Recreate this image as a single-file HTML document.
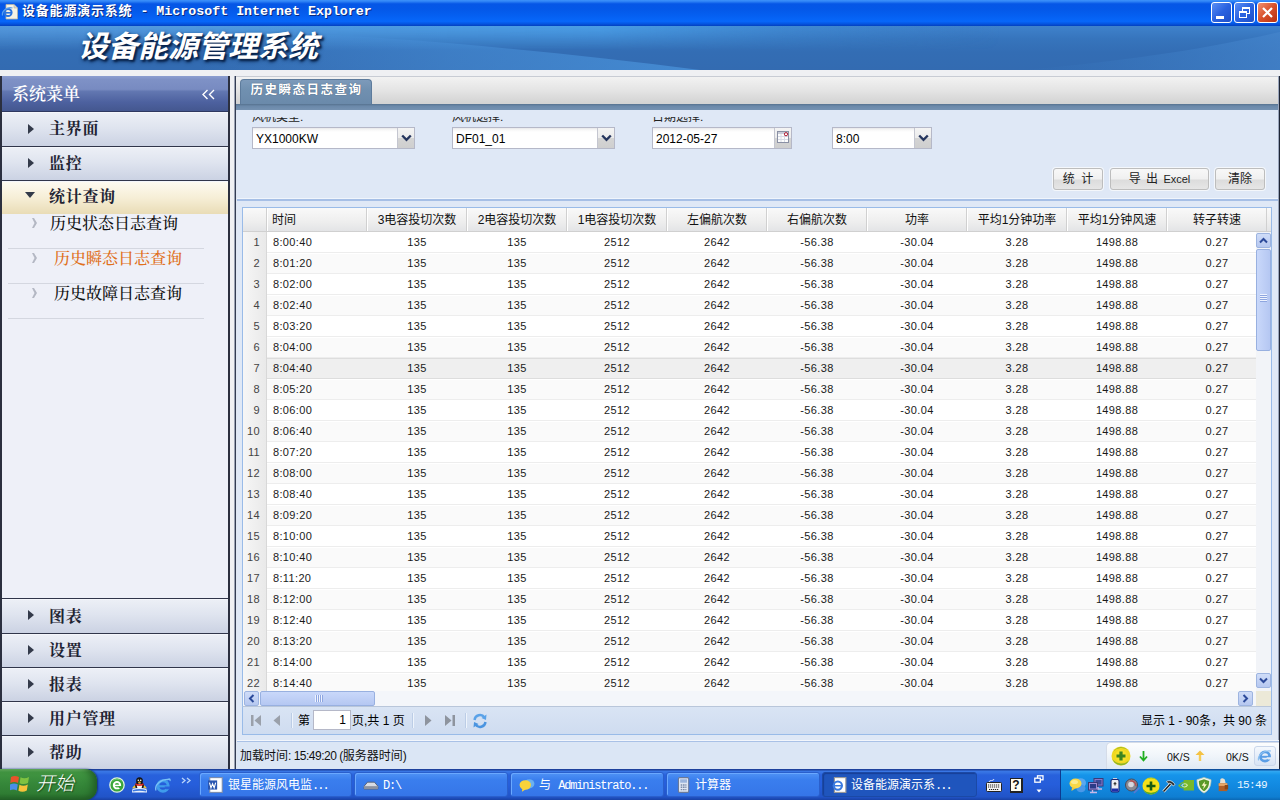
<!DOCTYPE html>
<html lang="zh-CN">
<head>
<meta charset="utf-8">
<title>设备能源演示系统 - Microsoft Internet Explorer</title>
<style>
*{box-sizing:border-box;margin:0;padding:0}
html,body{width:1280px;height:800px;overflow:hidden;background:#eff0f3;}
body{position:relative;font-family:"Liberation Sans","Noto Sans CJK SC",sans-serif;font-size:12px;color:#000;}
.abs{position:absolute}
/* ---------- XP title bar ---------- */
#titlebar{position:absolute;left:0;top:0;width:1280px;height:26px;
 background:linear-gradient(to bottom,#3f93fa 0%,#2c80f5 6%,#0656e6 15%,#0458e8 35%,#0560f2 62%,#0767fa 82%,#0556e2 91%,#0340bf 100%);}
#titlebar .ttl{position:absolute;left:22px;top:2px;height:18px;line-height:18px;color:#fff;font-weight:bold;white-space:nowrap;
 font-family:"Liberation Mono","Noto Sans CJK SC",monospace;font-size:13.3px;text-shadow:1px 1px 0 #0a2a80;}
#titlebar .ttl .cn{font-family:"Liberation Sans","Noto Sans CJK SC",sans-serif;font-size:13px;letter-spacing:0.8px}
.wbtn{position:absolute;top:2px;width:21px;height:21px;border:1px solid #fff;border-radius:3px;
 background:linear-gradient(135deg,#5b8ff5 0%,#2a62e0 50%,#1e4fc8 100%);}
.wbtn.close{background:linear-gradient(135deg,#f09070 0%,#d8502a 50%,#b83010 100%);}
/* ---------- banner ---------- */
#banner{position:absolute;left:0;top:26px;width:1280px;height:44px;overflow:hidden;
 background:linear-gradient(to bottom,#2f74bf 0%,#2c6cb6 40%,#2966ad 100%);}
#banner .logo{position:absolute;left:78px;top:1px;height:40px;line-height:40px;font-size:30px;font-weight:bold;font-style:italic;color:#fff;
 font-family:"Liberation Sans","Noto Sans CJK SC",sans-serif;letter-spacing:0;white-space:nowrap;text-shadow:2px 2px 2px #08224a,1px 2px 4px #0c2a55;}
/* ---------- sidebar ---------- */
#side{position:absolute;left:0;top:76px;width:230px;height:693px;background:#eef0f8;border-left:2px solid #2b2f3f;border-right:2px solid #2b2f3f;}
#side .hd{position:absolute;left:0;top:0;width:226px;height:36px;
 background:linear-gradient(to bottom,#8c9ed0 0%,#7e91c6 10%,#788bc1 38%,#6277b1 44%,#4d619f 75%,#44578f 100%);border-bottom:1px solid #2e3860;}
#side .hd .t{position:absolute;left:10px;top:7px;font-family:"Liberation Serif","Noto Serif CJK SC",serif;font-size:17px;font-weight:600;line-height:24px;color:#fff;}
.mi{position:absolute;left:0;width:226px;height:34px;border-bottom:1px solid #30354a;border-top:1px solid #f4f6fb;
 background:linear-gradient(to bottom,#eceff6 0%,#dfe4ef 45%,#cbd2e3 100%);}
.mi .t{position:absolute;left:47px;top:4px;font-family:"Liberation Serif","Noto Serif CJK SC",serif;font-weight:bold;font-size:16px;letter-spacing:0.7px;line-height:24px;color:#1f2433;}
.mi .ar{position:absolute;left:26px;top:10px;width:0;height:0;border-left:6px solid #333a4a;border-top:5px solid transparent;border-bottom:5px solid transparent;}
.mi.sel{background:linear-gradient(to bottom,#fdfaf0 0%,#f6eed6 50%,#e9dcb6 100%);}
.mi.sel .ar{left:23px;top:10px;border-left:5px solid transparent;border-right:5px solid transparent;border-top:6px solid #333a4a;border-bottom:0}
.si{position:absolute;left:0;width:226px;height:35px;}
.si .t{position:absolute;left:48px;top:-1px;font-family:"Liberation Serif","Noto Serif CJK SC",serif;font-size:16px;font-weight:500;line-height:24px;color:#111;}
.si .ar{position:absolute;left:30px;top:5px;width:5px;height:10px;background:#b4b8c4;clip-path:polygon(0 0,40% 0,100% 50%,40% 100%,0 100%,50% 50%)}
.si .ln{position:absolute;left:6px;width:196px;height:1px;background:#d4d7e0}
/* ---------- main ---------- */
#main{position:absolute;left:237px;top:76px;width:1043px;height:693px;background:#dfe8f6;box-shadow:-1px 0 0 #dfe6f2,-2px 0 0 #333c52,-3px 0 0 #9aa2b4}
#tabstrip{position:absolute;left:-1px;top:0;width:1044px;height:28px;background:linear-gradient(to bottom,#f2f2f2 0%,#e4e4e4 50%,#d2d2d2 100%);border-top:1px solid #c8ccd4}
#tab{position:absolute;left:4px;top:2px;width:132px;height:26px;border-radius:4px 4px 0 0;border:1px solid #5d7b9c;border-bottom:0;
 background:linear-gradient(to bottom,#7d9aba 0%,#7090b0 40%,#6a89aa 100%);color:#fff;font-weight:bold;font-size:12.5px;letter-spacing:1.5px;padding-left:1px;line-height:20px;text-align:center;
 font-family:"Liberation Sans","Noto Sans CJK SC",sans-serif;text-shadow:0 0 1px #3a506a}
#tabline{position:absolute;left:-1px;top:28px;width:1044px;height:6px;background:linear-gradient(to bottom,#56728f 0%,#6b89aa 35%,#7592b2 100%);}
#form{position:absolute;left:0;top:34px;width:1043px;height:91px;background:#dfe8f6;border-bottom:2px solid #a6bfe6;box-shadow:inset 0 -1px 0 #f0f5fc;overflow:hidden}
.lbl{position:absolute;top:-7px;font-size:12px;line-height:14px;color:#222;white-space:nowrap;font-family:"Liberation Sans","Noto Sans CJK SC",sans-serif}
.cb{position:absolute;top:17px;height:22px;background:linear-gradient(to bottom,#e8e8ea 0,#f8f8f8 2px,#fff 4px);border:1px solid #b5b8c8;font-size:12px;line-height:22px;padding-left:3px;color:#000;white-space:nowrap}
.cb .tr{position:absolute;right:0;top:0;width:17px;height:20px;border-left:1px solid #c4c6d0;background:linear-gradient(to bottom,#f4f4f4 0%,#ececec 48%,#d4d4d4 52%,#cfcfcf 100%)}
.cb .tr svg{position:absolute;left:3px;top:6px}
.btn{position:absolute;top:58px;height:22px;border:1px solid #bdbdbd;border-radius:3px;background:linear-gradient(to bottom,#f8f8f8 0%,#f0f0f0 50%,#dcdcdc 55%,#e6e6e6 100%);
 font-size:12px;line-height:20px;text-align:center;color:#222;white-space:nowrap;box-shadow:0 0 0 1px #f4f7fb}
/* grid */
#grid{position:absolute;left:5px;top:131px;width:1030px;height:500px;border-bottom:0;background:#fff;border:1px solid #99bbe8;overflow:hidden}
#ghd{position:absolute;left:0;top:0;width:1028px;height:24px;background:linear-gradient(to bottom,#f9f9f9 0%,#eeeeee 60%,#e3e4e6 100%);border-bottom:1px solid #d0d0d0}
#ghd div{position:absolute;top:0;height:23px;line-height:25px;font-size:12px;color:#111;text-align:center;border-right:1px solid #d0d0d0;border-left:1px solid #fff;white-space:nowrap;overflow:hidden}
#gbody{position:absolute;left:0;top:24px;width:1013px;height:459px;overflow:hidden;background:#fff}
.r{position:absolute;left:0;width:1013px;height:21px;border-bottom:1px solid #ededed;border-top:1px solid #fff;font-size:11px;letter-spacing:0.35px;line-height:19px;color:#1a1a1a;white-space:nowrap}
.r.alt{background:#fafafa}
.r.hov{background:#efefef;border-top:1px solid #ddd;border-bottom:1px solid #ddd}
.r span{position:absolute;top:0;height:19px;text-align:center;overflow:hidden}
.r .n{left:0;width:24px;background:linear-gradient(to right,#f6f6f6,#e9e9e9);border-right:1px solid #d8d8d8;color:#444;text-align:right;padding-right:6px;height:21px;top:-1px;line-height:21px}
.r .tm{left:30px;width:70px;text-align:left}
/* scrollbars */
#vsb{position:absolute;left:1013px;top:24px;width:15px;height:459px;background:#f2f4f8;}
#hsb{position:absolute;left:0;top:483px;width:1013px;height:15px;background:#f4f6fa;}
.sbb{position:absolute;width:15px;height:15px;border:1px solid #9db4e0;border-radius:2px;background:linear-gradient(to bottom,#cfdcf8,#b6c8f0);}
.thumb{position:absolute;border:1px solid #98b0e0;border-radius:2px;background:linear-gradient(to right,#c6d5f8,#b4c6f0)}
/* paging */
#pg{position:absolute;left:5px;top:630px;width:1030px;height:29px;background:linear-gradient(to bottom,#d9e4f4 0%,#cfdcf0 100%);border:1px solid #99bbe8;border-top:1px solid #b9c6da;font-size:12px;line-height:28px;color:#000}
#status{position:absolute;left:0;top:664px;width:1042px;height:29px;background:#dbe6f5;border-top:1px solid #f2f6fc;box-shadow:inset 0 1px 0 #a9c1e6}
#status .tx{position:absolute;left:3px;top:7px;font-size:12px;line-height:16px;color:#111;white-space:nowrap}
.sep{top:6px;width:2px;height:15px;border-left:1px solid #bccde6;border-right:1px solid #eef4fc}
#wdg{position:absolute;left:869px;top:1px;width:173px;height:27px;border-radius:5px 0 0 0;border:1px solid #d5dce8;border-bottom:0;border-right:0;background:linear-gradient(to bottom,#fcfdfe 0%,#f0f5fa 50%,#dfe9f4 100%);font-size:10.5px;line-height:16px;color:#111;font-family:"Liberation Sans",sans-serif}
/* taskbar */
#taskbar{position:absolute;left:0;top:769px;width:1280px;height:31px;
 background:linear-gradient(to bottom,#1d419c 0,#1d419c 1px,#3a78e6 2px,#3470e2 4px,#2861dc 6px,#265edb 50%,#2154c8 90%,#1941a5 100%);}
#start{position:absolute;left:0;top:0;width:97px;height:31px;border-radius:0 12px 12px 0;
 background:linear-gradient(to bottom,#6ab064 0%,#429642 10%,#36883a 45%,#2f7c33 80%,#225f26 100%);box-shadow:1px 0 2px #12307a,inset -8px 0 8px -4px #1f5a22}
#start .t{position:absolute;left:36px;top:2px;color:#fff;font-style:italic;font-weight:300;font-size:19px;line-height:26px;font-family:"Liberation Sans","Noto Sans CJK SC",sans-serif;text-shadow:1px 1px 1px #1a4a1a;white-space:nowrap}
.tk{position:absolute;top:3px;height:25px;border-radius:3px;background:linear-gradient(to bottom,#4f92f5 0%,#3a7eee 30%,#3575e8 100%);border:1px solid #2a5fcc;box-shadow:inset 1px 1px 0 #6aa8ff;
 color:#fff;font-size:12px;line-height:22px;white-space:nowrap;overflow:hidden;font-family:"Liberation Mono","Noto Sans CJK SC",monospace}
.tk.act{background:#1f55bd;border-color:#1b49a6;box-shadow:inset 1px 1px 1px #173f96}
.tk .ic{position:absolute;left:8px;top:4px;width:16px;height:16px}
.tk .tx{position:absolute;left:28px;top:2px}
.tk .la{letter-spacing:-1.2px}
#tray{position:absolute;left:1060px;top:0;width:220px;height:31px;border-left:1px solid #0e3a90;
 background:linear-gradient(to bottom,#0c4e9c 0,#0c4e9c 1px,#35a8f2 2px,#22a0ee 4px,#1694ea 6px,#1289e0 55%,#0f7ed2 90%,#0b68b4 100%);}
</style>
</head>
<body>
<div id="titlebar">
  <svg class="abs" style="left:1px;top:3px" width="18" height="18" viewBox="0 0 18 18"><path d="M5 1.5 H13 L16.5 5 V16 H5Z" fill="#f6f2e4" stroke="#b8b4a4" stroke-width=".8"/><path d="M13 1.5 V5 H16.5" fill="#dcd8c8" stroke="#b8b4a4" stroke-width=".6"/><circle cx="7" cy="9.5" r="3.6" fill="none" stroke="#2a74e0" stroke-width="2"/><path d="M3.5 9.8 H10.5" stroke="#2a74e0" stroke-width="1.6"/><path d="M1.5 12.5 C0.5 8 6 3.5 11.5 5" fill="none" stroke="#5aa0f0" stroke-width="1.2"/></svg>
  <div class="ttl"><span class="cn">设备能源演示系统</span> - Microsoft Internet Explorer</div>
  <div class="wbtn" style="left:1211px"><div class="abs" style="left:4px;top:13px;width:8px;height:3px;background:#fff"></div></div>
  <div class="wbtn" style="left:1234px"><div class="abs" style="left:7px;top:4px;width:8px;height:7px;border:1px solid #fff;border-top-width:2px"></div><div class="abs" style="left:4px;top:8px;width:8px;height:7px;border:1px solid #fff;border-top-width:2px;background:#2a62e0"></div></div>
  <div class="wbtn close" style="left:1257px"><svg class="abs" style="left:3px;top:3px" width="13" height="13" viewBox="0 0 13 13"><path d="M2 2 L11 11 M11 2 L2 11" stroke="#fff" stroke-width="2.2"/></svg></div>
</div>

<div id="banner">
  <svg class="abs" style="left:0;top:0" width="1280" height="44" viewBox="0 0 1280 44" preserveAspectRatio="none">
    <defs>
      <linearGradient id="bg1" x1="0" y1="0" x2="0" y2="1"><stop offset="0" stop-color="#3f82cc"/><stop offset="0.3" stop-color="#3674bc"/><stop offset="0.6" stop-color="#336db4"/><stop offset="1" stop-color="#336bb1"/></linearGradient><linearGradient id="vfade" x1="0" y1="0" x2="0" y2="1"><stop offset="0" stop-color="#fff" stop-opacity="1"/><stop offset="1" stop-color="#fff" stop-opacity="0"/></linearGradient><mask id="mk"><rect width="1000" height="24" fill="url(#vfade)"/></mask>
      <linearGradient id="sw1" x1="0" y1="0" x2="1" y2="0"><stop offset="0" stop-color="#5a9ee0" stop-opacity=".8"/><stop offset="0.6" stop-color="#4a9ee6" stop-opacity=".95"/><stop offset="1" stop-color="#3a80c8" stop-opacity="0"/></linearGradient>
      <linearGradient id="sw4" x1="0" y1="0" x2="1" y2="0"><stop offset="0" stop-color="#4a90d8" stop-opacity="0"/><stop offset="0.5" stop-color="#4a92da" stop-opacity=".45"/><stop offset="1" stop-color="#4a94dc" stop-opacity=".75"/></linearGradient><linearGradient id="sw2" x1="0" y1="0" x2="1" y2="0"><stop offset="0" stop-color="#3a7cc4" stop-opacity="0"/><stop offset="1" stop-color="#4585cc" stop-opacity=".7"/></linearGradient>
      <linearGradient id="sw3" x1="0" y1="0" x2="1" y2="0"><stop offset="0" stop-color="#6a9cd0" stop-opacity=".7"/><stop offset="1" stop-color="#3a78c0" stop-opacity="0"/></linearGradient>
    </defs>
    <rect width="1280" height="44" fill="url(#bg1)"/>
    <rect width="1000" height="24" fill="url(#sw1)" mask="url(#mk)"/>
    <path d="M200 4 C380 8 540 24 700 44 L200 44 Z" fill="url(#sw4)"/>
    <path d="M1020 44 C1120 36 1200 24 1280 6 V44 Z" fill="url(#sw2)"/>
  </svg>
  <div class="logo">设备能源管理系统</div>
</div>

<div id="side">
  <div class="hd"><div class="t">系统菜单</div>
    <svg class="abs" style="left:199px;top:13px" width="15" height="11" viewBox="0 0 15 11"><path d="M6.5 1 L2 5.5 L6.5 10 M13 1 L8.5 5.5 L13 10" fill="none" stroke="#fff" stroke-width="1.4"/></svg>
  </div>
  <div class="mi" style="top:36px;height:35px"><div class="ar" style="top:11px"></div><div class="t">主界面</div></div>
  <div class="mi" style="top:71px;height:34px"><div class="ar"></div><div class="t">监控</div></div>
  <div class="mi sel" style="top:105px;height:33px;border-bottom:0"><div class="ar"></div><div class="t" style="top:3px">统计查询</div></div>
  <div class="si" style="top:137px"><div class="ar"></div><div class="t">历史状态日志查询</div><div class="ln" style="top:35px"></div></div>
  <div class="si" style="top:172px"><div class="ar"></div><div class="t" style="color:#e0701c;left:52px">历史瞬态日志查询</div><div class="ln" style="top:35px"></div></div>
  <div class="si" style="top:207px"><div class="ar"></div><div class="t" style="left:52px">历史故障日志查询</div><div class="ln" style="top:35px"></div></div>
  <div class="abs" style="left:0;top:522px;width:226px;height:1px;background:#30354a"></div>
  <div class="mi" style="top:523px;height:35px"><div class="ar"></div><div class="t" style="top:5px">图表</div></div>
  <div class="mi" style="top:558px"><div class="ar"></div><div class="t">设置</div></div>
  <div class="mi" style="top:592px"><div class="ar"></div><div class="t">报表</div></div>
  <div class="mi" style="top:626px"><div class="ar"></div><div class="t">用户管理</div></div>
  <div class="mi" style="top:660px"><div class="ar"></div><div class="t">帮助</div></div>
</div>

<div id="main">
  <div id="tabstrip"><div id="tab">历史瞬态日志查询</div></div>
  <div id="tabline"></div>
  <div id="form">
    <div class="abs" style="left:0;top:7px;width:700px;height:10px;overflow:hidden">
    <div class="lbl" style="left:15px">风机类型:</div>
    <div class="lbl" style="left:215px">风机选择:</div>
    <div class="lbl" style="left:415px">日期选择:</div>
    </div>
    <div class="cb" style="left:15px;width:163px">YX1000KW<div class="tr"><svg width="11" height="8" viewBox="0 0 11 8"><path d="M1.2 1.5 L5.5 5.8 L9.8 1.5" fill="none" stroke="#26365e" stroke-width="2.4"/></svg></div></div>
    <div class="cb" style="left:215px;width:163px">DF01_01<div class="tr"><svg width="11" height="8" viewBox="0 0 11 8"><path d="M1.2 1.5 L5.5 5.8 L9.8 1.5" fill="none" stroke="#26365e" stroke-width="2.4"/></svg></div></div>
    <div class="cb" style="left:415px;width:140px">2012-05-27<div class="tr"><svg style="left:2px;top:3px" width="13" height="13" viewBox="0 0 13 13"><rect x="0.5" y="0.5" width="11" height="11" fill="#fdfdfd" stroke="#8a90a4"/><rect x="1" y="1" width="10" height="2" fill="#c8ccd8"/><path d="M1 5.5 H11 M1 8.5 H11 M4 3 V11 M7.5 3 V11" stroke="#d8dce6" stroke-width="1"/><circle cx="9" cy="3.2" r="1.6" fill="#fff" stroke="#b01830" stroke-width="1"/></svg></div></div>
    <div class="cb" style="left:595px;width:100px">8:00<div class="tr"><svg width="11" height="8" viewBox="0 0 11 8"><path d="M1.2 1.5 L5.5 5.8 L9.8 1.5" fill="none" stroke="#26365e" stroke-width="2.4"/></svg></div></div>
    <div class="btn" style="left:816px;width:50px;word-spacing:3px">统 计</div>
    <div class="btn" style="left:873px;width:99px;word-spacing:2px">导 出 <span style="font-size:11px">Excel</span></div>
    <div class="btn" style="left:978px;width:50px">清除</div>
  </div>
  <div id="grid">
    <div id="ghd"><div style="left:0;width:24px;border-left:0"></div><div style="left:24px;width:100px;text-align:left;padding-left:4px;">时间</div><div style="left:124px;width:100px;">3电容投切次数</div><div style="left:224px;width:100px;">2电容投切次数</div><div style="left:324px;width:100px;">1电容投切次数</div><div style="left:424px;width:100px;">左偏航次数</div><div style="left:524px;width:100px;">右偏航次数</div><div style="left:624px;width:100px;">功率</div><div style="left:724px;width:100px;">平均1分钟功率</div><div style="left:824px;width:100px;">平均1分钟风速</div><div style="left:924px;width:100px;">转子转速</div></div>
    <div id="gbody"><div class="r" style="top:0px"><span class="n">1</span><span class="tm">8:00:40</span><span style="left:124px;width:100px">135</span><span style="left:224px;width:100px">135</span><span style="left:324px;width:100px">2512</span><span style="left:424px;width:100px">2642</span><span style="left:524px;width:100px">-56.38</span><span style="left:624px;width:100px">-30.04</span><span style="left:724px;width:100px">3.28</span><span style="left:824px;width:100px">1498.88</span><span style="left:924px;width:100px">0.27</span></div>
<div class="r alt" style="top:21px"><span class="n">2</span><span class="tm">8:01:20</span><span style="left:124px;width:100px">135</span><span style="left:224px;width:100px">135</span><span style="left:324px;width:100px">2512</span><span style="left:424px;width:100px">2642</span><span style="left:524px;width:100px">-56.38</span><span style="left:624px;width:100px">-30.04</span><span style="left:724px;width:100px">3.28</span><span style="left:824px;width:100px">1498.88</span><span style="left:924px;width:100px">0.27</span></div>
<div class="r" style="top:42px"><span class="n">3</span><span class="tm">8:02:00</span><span style="left:124px;width:100px">135</span><span style="left:224px;width:100px">135</span><span style="left:324px;width:100px">2512</span><span style="left:424px;width:100px">2642</span><span style="left:524px;width:100px">-56.38</span><span style="left:624px;width:100px">-30.04</span><span style="left:724px;width:100px">3.28</span><span style="left:824px;width:100px">1498.88</span><span style="left:924px;width:100px">0.27</span></div>
<div class="r alt" style="top:63px"><span class="n">4</span><span class="tm">8:02:40</span><span style="left:124px;width:100px">135</span><span style="left:224px;width:100px">135</span><span style="left:324px;width:100px">2512</span><span style="left:424px;width:100px">2642</span><span style="left:524px;width:100px">-56.38</span><span style="left:624px;width:100px">-30.04</span><span style="left:724px;width:100px">3.28</span><span style="left:824px;width:100px">1498.88</span><span style="left:924px;width:100px">0.27</span></div>
<div class="r" style="top:84px"><span class="n">5</span><span class="tm">8:03:20</span><span style="left:124px;width:100px">135</span><span style="left:224px;width:100px">135</span><span style="left:324px;width:100px">2512</span><span style="left:424px;width:100px">2642</span><span style="left:524px;width:100px">-56.38</span><span style="left:624px;width:100px">-30.04</span><span style="left:724px;width:100px">3.28</span><span style="left:824px;width:100px">1498.88</span><span style="left:924px;width:100px">0.27</span></div>
<div class="r alt" style="top:105px"><span class="n">6</span><span class="tm">8:04:00</span><span style="left:124px;width:100px">135</span><span style="left:224px;width:100px">135</span><span style="left:324px;width:100px">2512</span><span style="left:424px;width:100px">2642</span><span style="left:524px;width:100px">-56.38</span><span style="left:624px;width:100px">-30.04</span><span style="left:724px;width:100px">3.28</span><span style="left:824px;width:100px">1498.88</span><span style="left:924px;width:100px">0.27</span></div>
<div class="r hov" style="top:126px"><span class="n">7</span><span class="tm">8:04:40</span><span style="left:124px;width:100px">135</span><span style="left:224px;width:100px">135</span><span style="left:324px;width:100px">2512</span><span style="left:424px;width:100px">2642</span><span style="left:524px;width:100px">-56.38</span><span style="left:624px;width:100px">-30.04</span><span style="left:724px;width:100px">3.28</span><span style="left:824px;width:100px">1498.88</span><span style="left:924px;width:100px">0.27</span></div>
<div class="r alt" style="top:147px"><span class="n">8</span><span class="tm">8:05:20</span><span style="left:124px;width:100px">135</span><span style="left:224px;width:100px">135</span><span style="left:324px;width:100px">2512</span><span style="left:424px;width:100px">2642</span><span style="left:524px;width:100px">-56.38</span><span style="left:624px;width:100px">-30.04</span><span style="left:724px;width:100px">3.28</span><span style="left:824px;width:100px">1498.88</span><span style="left:924px;width:100px">0.27</span></div>
<div class="r" style="top:168px"><span class="n">9</span><span class="tm">8:06:00</span><span style="left:124px;width:100px">135</span><span style="left:224px;width:100px">135</span><span style="left:324px;width:100px">2512</span><span style="left:424px;width:100px">2642</span><span style="left:524px;width:100px">-56.38</span><span style="left:624px;width:100px">-30.04</span><span style="left:724px;width:100px">3.28</span><span style="left:824px;width:100px">1498.88</span><span style="left:924px;width:100px">0.27</span></div>
<div class="r alt" style="top:189px"><span class="n">10</span><span class="tm">8:06:40</span><span style="left:124px;width:100px">135</span><span style="left:224px;width:100px">135</span><span style="left:324px;width:100px">2512</span><span style="left:424px;width:100px">2642</span><span style="left:524px;width:100px">-56.38</span><span style="left:624px;width:100px">-30.04</span><span style="left:724px;width:100px">3.28</span><span style="left:824px;width:100px">1498.88</span><span style="left:924px;width:100px">0.27</span></div>
<div class="r" style="top:210px"><span class="n">11</span><span class="tm">8:07:20</span><span style="left:124px;width:100px">135</span><span style="left:224px;width:100px">135</span><span style="left:324px;width:100px">2512</span><span style="left:424px;width:100px">2642</span><span style="left:524px;width:100px">-56.38</span><span style="left:624px;width:100px">-30.04</span><span style="left:724px;width:100px">3.28</span><span style="left:824px;width:100px">1498.88</span><span style="left:924px;width:100px">0.27</span></div>
<div class="r alt" style="top:231px"><span class="n">12</span><span class="tm">8:08:00</span><span style="left:124px;width:100px">135</span><span style="left:224px;width:100px">135</span><span style="left:324px;width:100px">2512</span><span style="left:424px;width:100px">2642</span><span style="left:524px;width:100px">-56.38</span><span style="left:624px;width:100px">-30.04</span><span style="left:724px;width:100px">3.28</span><span style="left:824px;width:100px">1498.88</span><span style="left:924px;width:100px">0.27</span></div>
<div class="r" style="top:252px"><span class="n">13</span><span class="tm">8:08:40</span><span style="left:124px;width:100px">135</span><span style="left:224px;width:100px">135</span><span style="left:324px;width:100px">2512</span><span style="left:424px;width:100px">2642</span><span style="left:524px;width:100px">-56.38</span><span style="left:624px;width:100px">-30.04</span><span style="left:724px;width:100px">3.28</span><span style="left:824px;width:100px">1498.88</span><span style="left:924px;width:100px">0.27</span></div>
<div class="r alt" style="top:273px"><span class="n">14</span><span class="tm">8:09:20</span><span style="left:124px;width:100px">135</span><span style="left:224px;width:100px">135</span><span style="left:324px;width:100px">2512</span><span style="left:424px;width:100px">2642</span><span style="left:524px;width:100px">-56.38</span><span style="left:624px;width:100px">-30.04</span><span style="left:724px;width:100px">3.28</span><span style="left:824px;width:100px">1498.88</span><span style="left:924px;width:100px">0.27</span></div>
<div class="r" style="top:294px"><span class="n">15</span><span class="tm">8:10:00</span><span style="left:124px;width:100px">135</span><span style="left:224px;width:100px">135</span><span style="left:324px;width:100px">2512</span><span style="left:424px;width:100px">2642</span><span style="left:524px;width:100px">-56.38</span><span style="left:624px;width:100px">-30.04</span><span style="left:724px;width:100px">3.28</span><span style="left:824px;width:100px">1498.88</span><span style="left:924px;width:100px">0.27</span></div>
<div class="r alt" style="top:315px"><span class="n">16</span><span class="tm">8:10:40</span><span style="left:124px;width:100px">135</span><span style="left:224px;width:100px">135</span><span style="left:324px;width:100px">2512</span><span style="left:424px;width:100px">2642</span><span style="left:524px;width:100px">-56.38</span><span style="left:624px;width:100px">-30.04</span><span style="left:724px;width:100px">3.28</span><span style="left:824px;width:100px">1498.88</span><span style="left:924px;width:100px">0.27</span></div>
<div class="r" style="top:336px"><span class="n">17</span><span class="tm">8:11:20</span><span style="left:124px;width:100px">135</span><span style="left:224px;width:100px">135</span><span style="left:324px;width:100px">2512</span><span style="left:424px;width:100px">2642</span><span style="left:524px;width:100px">-56.38</span><span style="left:624px;width:100px">-30.04</span><span style="left:724px;width:100px">3.28</span><span style="left:824px;width:100px">1498.88</span><span style="left:924px;width:100px">0.27</span></div>
<div class="r alt" style="top:357px"><span class="n">18</span><span class="tm">8:12:00</span><span style="left:124px;width:100px">135</span><span style="left:224px;width:100px">135</span><span style="left:324px;width:100px">2512</span><span style="left:424px;width:100px">2642</span><span style="left:524px;width:100px">-56.38</span><span style="left:624px;width:100px">-30.04</span><span style="left:724px;width:100px">3.28</span><span style="left:824px;width:100px">1498.88</span><span style="left:924px;width:100px">0.27</span></div>
<div class="r" style="top:378px"><span class="n">19</span><span class="tm">8:12:40</span><span style="left:124px;width:100px">135</span><span style="left:224px;width:100px">135</span><span style="left:324px;width:100px">2512</span><span style="left:424px;width:100px">2642</span><span style="left:524px;width:100px">-56.38</span><span style="left:624px;width:100px">-30.04</span><span style="left:724px;width:100px">3.28</span><span style="left:824px;width:100px">1498.88</span><span style="left:924px;width:100px">0.27</span></div>
<div class="r alt" style="top:399px"><span class="n">20</span><span class="tm">8:13:20</span><span style="left:124px;width:100px">135</span><span style="left:224px;width:100px">135</span><span style="left:324px;width:100px">2512</span><span style="left:424px;width:100px">2642</span><span style="left:524px;width:100px">-56.38</span><span style="left:624px;width:100px">-30.04</span><span style="left:724px;width:100px">3.28</span><span style="left:824px;width:100px">1498.88</span><span style="left:924px;width:100px">0.27</span></div>
<div class="r" style="top:420px"><span class="n">21</span><span class="tm">8:14:00</span><span style="left:124px;width:100px">135</span><span style="left:224px;width:100px">135</span><span style="left:324px;width:100px">2512</span><span style="left:424px;width:100px">2642</span><span style="left:524px;width:100px">-56.38</span><span style="left:624px;width:100px">-30.04</span><span style="left:724px;width:100px">3.28</span><span style="left:824px;width:100px">1498.88</span><span style="left:924px;width:100px">0.27</span></div>
<div class="r alt" style="top:441px"><span class="n">22</span><span class="tm">8:14:40</span><span style="left:124px;width:100px">135</span><span style="left:224px;width:100px">135</span><span style="left:324px;width:100px">2512</span><span style="left:424px;width:100px">2642</span><span style="left:524px;width:100px">-56.38</span><span style="left:624px;width:100px">-30.04</span><span style="left:724px;width:100px">3.28</span><span style="left:824px;width:100px">1498.88</span><span style="left:924px;width:100px">0.27</span></div>
</div>
    <div id="vsb">
      <div class="sbb" style="left:0;top:1px"><svg class="abs" style="left:2px;top:3px" width="9" height="7" viewBox="0 0 9 7"><path d="M1 5.5 L4.5 2 L8 5.5" fill="none" stroke="#2c4a9a" stroke-width="2"/></svg></div>
      <div class="thumb" style="left:0;top:17px;width:15px;height:102px;background:linear-gradient(to right,#c9d8fa,#b5c7f2)"><div class="abs" style="left:3px;top:44px;width:7px;height:1px;background:#eef3ff;box-shadow:0 2px 0 #eef3ff,0 4px 0 #eef3ff,0 6px 0 #eef3ff,0 1px 0 #8ea6e0,0 3px 0 #8ea6e0,0 5px 0 #8ea6e0,0 7px 0 #8ea6e0"></div></div>
      <div class="sbb" style="left:0;top:441px"><svg class="abs" style="left:2px;top:3px" width="9" height="7" viewBox="0 0 9 7"><path d="M1 1.5 L4.5 5 L8 1.5" fill="none" stroke="#2c4a9a" stroke-width="2"/></svg></div>
    </div>
    <div id="hsb">
      <div class="sbb" style="left:1px;top:0"><svg class="abs" style="left:3px;top:2px" width="7" height="9" viewBox="0 0 7 9"><path d="M5.5 1 L2 4.5 L5.5 8" fill="none" stroke="#2c4a9a" stroke-width="2"/></svg></div>
      <div class="thumb" style="left:17px;top:0;width:115px;height:15px;background:linear-gradient(to bottom,#c9d8fa,#b5c7f2)"><div class="abs" style="left:54px;top:3px;width:1px;height:7px;background:#eef3ff;box-shadow:2px 0 0 #eef3ff,4px 0 0 #eef3ff,6px 0 0 #eef3ff,1px 0 0 #8ea6e0,3px 0 0 #8ea6e0,5px 0 0 #8ea6e0,7px 0 0 #8ea6e0"></div></div>
      <div class="sbb" style="left:995px;top:0"><svg class="abs" style="left:3px;top:2px" width="7" height="9" viewBox="0 0 7 9"><path d="M1.5 1 L5 4.5 L1.5 8" fill="none" stroke="#2c4a9a" stroke-width="2"/></svg></div>
    </div>
    <div class="abs" style="left:1013px;top:483px;width:15px;height:15px;background:#ece9d8"></div>
  </div>
  <div id="pg">
    <svg class="abs" style="left:7px;top:7px" width="12" height="13" viewBox="0 0 12 13"><rect x="1" y="1" width="2.5" height="11" fill="#9aa0aa"/><path d="M11 1 L4.5 6.5 L11 12 Z" fill="#9aa0aa"/></svg>
    <svg class="abs" style="left:29px;top:7px" width="9" height="13" viewBox="0 0 9 13"><path d="M8 1 L1.5 6.5 L8 12 Z" fill="#9aa0aa"/></svg>
    <div class="abs sep" style="left:48px"></div>
    <div class="abs" style="left:55px;top:0">第</div>
    <div class="abs" style="left:70px;top:3px;width:38px;height:20px;background:#fff;border:1px solid #b5b8c8;line-height:18px;text-align:right;padding-right:4px">1</div>
    <div class="abs" style="left:109px;top:0;white-space:nowrap">页,共 1 页</div>
    <div class="abs sep" style="left:169px"></div>
    <svg class="abs" style="left:181px;top:7px" width="9" height="13" viewBox="0 0 9 13"><path d="M1 1 L7.5 6.5 L1 12 Z" fill="#8e949e"/></svg>
    <svg class="abs" style="left:201px;top:7px" width="12" height="13" viewBox="0 0 12 13"><path d="M1 1 L7.5 6.5 L1 12 Z" fill="#8e949e"/><rect x="8.5" y="1" width="2.5" height="11" fill="#8e949e"/></svg>
    <div class="abs sep" style="left:222px"></div>
    <svg class="abs" style="left:229px;top:6px" width="16" height="16" viewBox="0 0 16 16"><path d="M2.5 7 A5.5 5.5 0 0 1 12.5 4.5" fill="none" stroke="#5aa2e8" stroke-width="2.4"/><path d="M14.5 1.5 L14 7 L9.5 5 Z" fill="#5aa2e8"/><path d="M13.5 9 A5.5 5.5 0 0 1 3.5 11.5" fill="none" stroke="#4a94e0" stroke-width="2.4"/><path d="M1.5 14.5 L2 9 L6.5 11 Z" fill="#4a94e0"/></svg>
    <div class="abs" style="right:4px;top:0;white-space:nowrap">显示 1 - 90条，共 90 条</div>
  </div>
  <div class="abs" style="left:1042px;top:0;width:1px;height:693px;background:#1f2636;box-shadow:-1px 0 0 #9aa6bc"></div>
  <div id="status"><div class="tx">加载时间<span style="letter-spacing:-0.5px">: 15:49:20 (</span>服务器时间<span style="letter-spacing:-0.5px">)</span></div>
    <div id="wdg">
      <svg class="abs" style="left:4px;top:3px" width="20" height="20" viewBox="0 0 20 20"><circle cx="10" cy="10" r="9.5" fill="#f0d822"/><path d="M1.5 13 A9 9 0 0 0 18 14.5 A11 11 0 0 1 1.5 13Z" fill="#8ab42a"/><path d="M2.5 5.5 A9 9 0 0 1 16.5 3.8 A11 11 0 0 0 2.5 5.5Z" fill="#8ab42a"/><circle cx="10" cy="10" r="6" fill="#f6e02a"/><path d="M10 5.5 V14.5 M5.5 10 H14.5" stroke="#3c8420" stroke-width="3.2"/></svg>
      <svg class="abs" style="left:32px;top:8px" width="9" height="11" viewBox="0 0 9 11"><path d="M4.5 0 V9 M1 5.5 L4.5 9.5 L8 5.5" fill="none" stroke="#1fae1f" stroke-width="1.8"/></svg>
      <div class="abs" style="left:60px;top:6px">0K/S</div>
      <svg class="abs" style="left:88px;top:7px" width="10" height="11" viewBox="0 0 10 11"><path d="M5 11 V3" stroke="#f6cc55" stroke-width="2.4"/><path d="M0.5 5 L5 0.5 L9.5 5 Z" fill="#f4c244"/></svg>
      <div class="abs" style="left:119px;top:6px">0K/S</div>
      <div class="abs" style="left:147px;top:3px;width:22px;height:20px;border:1px solid #c9d6ea;border-radius:3px;background:linear-gradient(to bottom,#f4f8fd,#d8e4f4)">
        <svg class="abs" style="left:2px;top:1px" width="16" height="16" viewBox="0 0 16 16"><circle cx="8" cy="8.5" r="4.6" fill="none" stroke="#5a9ee6" stroke-width="2.8"/><path d="M3.5 8.8 H13" stroke="#5a9ee6" stroke-width="2"/><path d="M9.5 9.2 H14 V11.6 H10.8Z" fill="#e4edf8"/><path d="M1.5 12.5 C0.5 7.5 6 2 14 3" fill="none" stroke="#8cc0f0" stroke-width="1.2"/></svg>
      </div>
    </div>
  </div>
</div>

<div id="taskbar">
  <div id="start">
    <svg class="abs" style="left:10px;top:5px" width="21" height="19" viewBox="0 0 21 19"><path d="M1 3 C3.5 1.5 6 1.5 9 3 L8 9 C5.5 7.7 3 7.7 0.3 9 Z" fill="#e8532a"/><path d="M10.5 3.3 C13 4.6 16 4.6 19 3 L18 9 C15.5 10.4 12.5 10.4 9.6 9.2 Z" fill="#7fc241"/><path d="M0 10.5 C2.8 9.2 5.3 9.2 7.8 10.4 L6.8 16.5 C4.5 15.2 2 15.2 -0.8 16.6 Z" fill="#4a8ee8"/><path d="M9.4 10.8 C12.2 12 15 12 17.8 10.5 L16.8 16.5 C14 18 11.2 18 8.4 16.8 Z" fill="#f7c23a"/></svg>
    <div class="t">开始</div>
  </div>
  <svg class="abs" style="left:109px;top:8px" width="16" height="16" viewBox="0 0 16 16"><circle cx="8" cy="8" r="7.2" fill="#3aa63a" stroke="#dff3df" stroke-width="1.3"/><path d="M2.5 5 A6.2 6.2 0 0 1 13.5 5 A8 8 0 0 0 2.5 5Z" fill="#6cc86c"/><circle cx="8" cy="8.2" r="3.2" fill="none" stroke="#fff" stroke-width="1.9"/><path d="M5 8.4 H11.4" stroke="#fff" stroke-width="1.5"/><path d="M9 8.9 H12.4 V11 H9.8Z" fill="#3aa63a"/></svg>
  <svg class="abs" style="left:131px;top:8px" width="17" height="16" viewBox="0 0 17 16"><path d="M1 11.5 C3 8 5 7.5 8.5 8 C12 7.5 14 8 16 11.5 L12 10.5 L5 10.5Z" fill="#f4c832"/><ellipse cx="8.5" cy="3.8" rx="3.4" ry="3.6" fill="#161616"/><ellipse cx="8.5" cy="8.5" rx="4.4" ry="3.8" fill="#161616"/><ellipse cx="8.5" cy="9" rx="2.6" ry="2.6" fill="#f6f6f6"/><path d="M4.6 6.2 C7 7.6 10 7.6 12.4 6.2 L12.6 8 C10 9.4 7 9.4 4.4 8Z" fill="#de2a20"/><ellipse cx="8.5" cy="5.2" rx="1.6" ry=".8" fill="#f4a81c"/><circle cx="7.3" cy="3.2" r=".8" fill="#fff"/><circle cx="9.7" cy="3.2" r=".8" fill="#fff"/><path d="M1.5 12 C5 10.8 12 10.8 15.5 12 L16 15.5 H1Z" fill="#e8f0fc"/><path d="M2 13 C6 11.6 11 11.6 15 13 L15 14.6 C11 13.4 6 13.4 2 14.6Z" fill="#3a78e0"/></svg>
  <svg class="abs" style="left:154px;top:8px" width="18" height="17" viewBox="0 0 18 17"><circle cx="9" cy="9" r="5.2" fill="none" stroke="#3f9cec" stroke-width="3"/><path d="M4 9.3 H14.5" stroke="#3f9cec" stroke-width="2.2"/><path d="M10.5 9.6 H16 V12.2 H12.2Z" fill="#2860dc"/><path d="M2 13.5 C0.2 8 7 1.5 16 2.5" fill="none" stroke="#7ac0f6" stroke-width="1.3"/><path d="M13 3 C15 1.5 16.8 1.8 16 4" fill="none" stroke="#7ac0f6" stroke-width="1.1"/></svg>
  <svg class="abs" style="left:181px;top:8px" width="11" height="7" viewBox="0 0 11 7"><path d="M1 1 L4 3.5 L1 6 M6 1 L9 3.5 L6 6" fill="none" stroke="#b8d4fa" stroke-width="1.3"/></svg>

  <div class="tk" style="left:199px;width:153px"><svg class="ic" viewBox="0 0 14 14"><rect x="1.5" y="0.5" width="11" height="13" fill="#fff" stroke="#7a8cb0"/><rect x="0" y="3" width="8" height="8" fill="#2a56b0"/><path d="M1.3 5 L2.6 9.5 L4 6 L5.4 9.5 L6.7 5" fill="none" stroke="#fff" stroke-width="1"/></svg><span class="tx">银星能源风电监<span class="la" style="letter-spacing:-2px">...</span></span></div>
  <div class="tk" style="left:354px;width:154px"><svg class="ic" viewBox="0 0 14 14"><path d="M1 8 L4 4.5 H10 L13 8 V10.5 H1Z" fill="#d8dce4" stroke="#5a6070" stroke-width=".8"/><rect x="1" y="8" width="12" height="2.6" fill="#8c92a0"/></svg><span class="tx"><span class="la">D:\</span></span></div>
  <div class="tk" style="left:510px;width:154px"><svg class="ic" viewBox="0 0 14 14"><ellipse cx="9" cy="6" rx="4.5" ry="4" fill="#6ab0f0"/><ellipse cx="5.5" cy="7" rx="5" ry="4.2" fill="#f8d23a"/><path d="M3 10 L2.5 13 L6 10.8Z" fill="#f8d23a"/></svg><span class="tx">与 <span class="la">Administrato...</span></span></div>
  <div class="tk" style="left:666px;width:154px"><svg class="ic" viewBox="0 0 14 14"><rect x="3" y="0.5" width="9" height="13" rx="1" fill="#dfe6f2" stroke="#6a7a9a"/><rect x="4.5" y="2" width="6" height="3" fill="#9ab4dc"/><path d="M5 7 H10 M5 9 H10 M5 11 H10" stroke="#7a8aa8" stroke-width="1.2" stroke-dasharray="1.4 .6"/></svg><span class="tx">计算器</span></div>
  <div class="tk act" style="left:822px;width:155px"><svg class="ic" viewBox="0 0 14 14"><rect x="3" y="0.5" width="10" height="13" fill="#fff" stroke="#9a9a9a"/><circle cx="6" cy="7.5" r="3.6" fill="none" stroke="#3a7ae0" stroke-width="1.8"/><path d="M1.5 7.6 H10" stroke="#3a7ae0" stroke-width="1.4"/></svg><span class="tx">设备能源演示系<span class="la" style="letter-spacing:-2px">...</span></span></div>

  <svg class="abs" style="left:986px;top:10px" width="16" height="13" viewBox="0 0 16 13"><path d="M3 3 C3 0.5 8 2.5 8 0" fill="none" stroke="#fff" stroke-width=".8"/><rect x="0.5" y="3.5" width="15" height="9" rx="1" fill="#f4f4f4" stroke="#222"/><path d="M2 6 H14 M2 8 H14 M3 10.5 H13" stroke="#222" stroke-width="1.2" stroke-dasharray="1.2 .8"/></svg>
  <div class="abs" style="left:1010px;top:9px;width:13px;height:15px;background:#fdfdf0;border:1px solid #222;border-right-width:2px;border-bottom-width:2px;font:bold 12px/12px 'Liberation Sans',sans-serif;color:#111;text-align:center">?</div>
  <svg class="abs" style="left:1034px;top:6px" width="10" height="22" viewBox="0 0 10 22"><rect x="3.5" y="0.8" width="5.5" height="4" fill="none" stroke="#fff" stroke-width="1.3"/><rect x="0.8" y="3.2" width="5.5" height="4" fill="#2458cc" stroke="#fff" stroke-width="1.3"/><path d="M2.5 14.5 H7.5 L5 17.5Z" fill="#fff"/></svg>

  <div id="tray"><div class="abs" style="left:0;top:1px;width:175px;height:30px">
    <svg class="abs" style="left:8px;top:7px" width="18" height="17" viewBox="0 0 18 17"><ellipse cx="11.5" cy="6" rx="5.5" ry="4.8" fill="#5aa8f0"/><ellipse cx="12" cy="11.5" rx="4.5" ry="3.8" fill="#4a98e8"/><ellipse cx="6.5" cy="6.5" rx="6" ry="5" fill="#f8d848"/><path d="M3 10 L2.5 14 L7 11Z" fill="#f0c838"/><ellipse cx="5.5" cy="5" rx="3.5" ry="2" fill="#fdf0a0" opacity=".8"/></svg>
    <svg class="abs" style="left:27px;top:8px" width="16" height="16" viewBox="0 0 16 16"><rect x="6" y="0.5" width="9" height="7.5" fill="#8a78c8" stroke="#3a3a78"/><rect x="7.5" y="2" width="6" height="4.5" fill="#3a4a98"/><rect x="0.5" y="4.5" width="9" height="7.5" fill="#9a88d0" stroke="#3a3a78"/><rect x="2" y="6" width="6" height="4.5" fill="#2a3a88"/><path d="M2 14.5 H9 M4.5 12 V14.5 M10 9 V11 H14" stroke="#c8b8e8" stroke-width="1.4" fill="none"/></svg>
    <svg class="abs" style="left:49px;top:8px" width="10" height="15" viewBox="0 0 10 15"><rect x="3" y="0" width="4" height="2" fill="#d0d0dc"/><rect x="1" y="1.5" width="8" height="12.5" rx="1.5" fill="#ececf4" stroke="#1a2470" stroke-width="1.1"/><rect x="1.6" y="10.5" width="6.8" height="3.2" fill="#1c2eaa"/><path d="M5 4 V7.5 M3.6 5.7 H6.4" stroke="#222" stroke-width="1"/></svg>
    <svg class="abs" style="left:64px;top:8px" width="16" height="17" viewBox="0 0 16 17"><circle cx="6.5" cy="7" r="6" fill="#8a8a94" stroke="#4a4a58"/><circle cx="6" cy="6.5" r="2.8" fill="#d8d8e0"/><path d="M5 3 A5 5 0 0 1 11 8" stroke="#c04848" stroke-width="1.2" fill="none"/><path d="M9 15 L14.5 9.5" stroke="#5a78d0" stroke-width="1.6"/></svg>
    <svg class="abs" style="left:81px;top:7px" width="18" height="18" viewBox="0 0 18 18"><circle cx="9" cy="9" r="8.5" fill="#f4e01a"/><path d="M1 12 A8.6 8.6 0 0 0 16.5 13 A11 11 0 0 1 1 12Z" fill="#5aa828"/><path d="M3 3.5 A8.5 8.5 0 0 1 15 3.2 A10 10 0 0 0 3 3.5Z" fill="#6ab030"/><path d="M9 4.5 V13.5 M4.5 9 H13.5" stroke="#1a5a10" stroke-width="2.6"/></svg>
    <svg class="abs" style="left:101px;top:9px" width="14" height="14" viewBox="0 0 14 14"><path d="M1.5 12.5 L8.5 5" stroke="#f0f0f0" stroke-width="3"/><path d="M1.5 12.5 L8.5 5" stroke="#1a1a1a" stroke-width="1.4"/><path d="M4.5 2.5 C7 0.8 10.5 1.5 13 5.5 L11.2 7 C9.8 4.6 8 3.8 6 4.4Z" fill="#2a2a2a" stroke="#f0f0f0" stroke-width=".7"/></svg>
    <svg class="abs" style="left:117px;top:10px" width="16" height="10.5" viewBox="0 0 17 12" preserveAspectRatio="none"><rect x="6" y="0" width="11" height="12" fill="#78b82a"/><path d="M1 6.5 C4 1.5 9 1.5 12 4.5 C9 10 4 10.5 1 6.5Z" fill="none" stroke="#78b82a" stroke-width="1.4"/><path d="M4 6.2 C6 3.5 9 4 10 6 C8.5 8.5 5.5 8.5 4 6.2Z" fill="none" stroke="#d8f0b0" stroke-width="1.1"/></svg>
    <svg class="abs" style="left:135px;top:7px" width="16" height="16.5" viewBox="0 0 17 18" preserveAspectRatio="none"><path d="M8.5 0.5 L16 3 C16 10 13.5 15 8.5 17.5 C3.5 15 1 10 1 3Z" fill="#f4f8f0" stroke="#b8c8b0" stroke-width=".8"/><path d="M8.5 2.5 L14 4.3 C14 10 12 13.5 8.5 15.5 C5 13.5 3 10 3 4.3Z" fill="#5a9a28"/><path d="M9.5 4.5 L6 9.5 H8.5 L7.5 13.5 L11.5 8 H9Z" fill="#fff8c8"/></svg>
    <svg class="abs" style="left:156px;top:8px" width="12" height="14" viewBox="0 0 14 16" preserveAspectRatio="none"><path d="M4 1 C6 -0.5 9 0.5 9.5 3 L10 6 H3.5Z" fill="#e8e0d0"/><rect x="2" y="6" width="10" height="9" fill="#b06028"/><rect x="2" y="6" width="10" height="3" fill="#e8a868"/><rect x="9" y="8" width="4" height="5" fill="#8a4818"/></svg>
    </div>
    <div class="abs" style="left:176px;top:8px;color:#eaf6ff;font-family:'Liberation Mono',monospace;font-size:11px;line-height:16px;letter-spacing:-0.6px">15:49</div>
  </div>
</div>
</body>
</html>
